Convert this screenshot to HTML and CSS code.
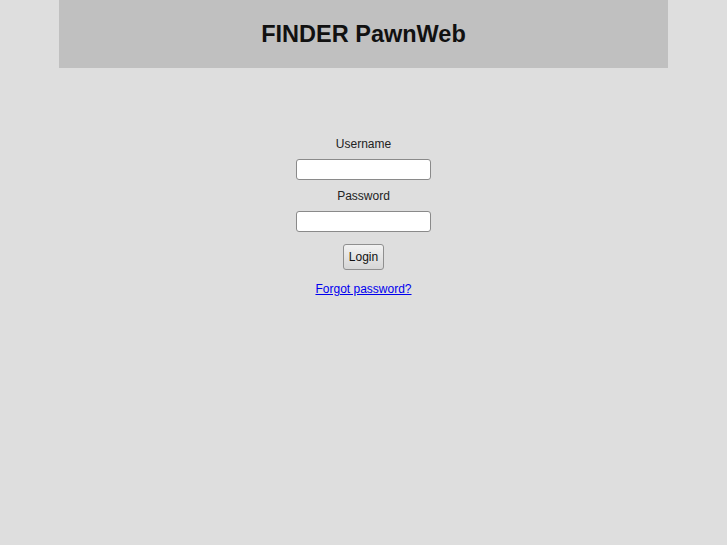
FILE: index.html
```html
<!DOCTYPE html>
<html>
<head>
<meta charset="utf-8">
<title>FINDER PawnWeb</title>
<link rel="stylesheet" href="styles.css">
</head>
<body>
<div class="header"><h1>FINDER PawnWeb</h1></div>
<form class="login">
  <label class="lbl" for="u">Username</label>
  <input class="field" id="u" type="text">
  <label class="lbl" for="p">Password</label>
  <input class="field" id="p" type="password">
  <button class="btn" type="button">Login</button>
  <a class="forgot" href="#">Forgot password?</a>
</form>
</body>
</html>
```
FILE: styles.css
```css
html, body { margin: 0; padding: 0; }
body {
  background: #dedede;
  font-family: "Liberation Sans", Arial, sans-serif;
  color: #000;
  height: 545px;
}
.header {
  width: 609px;
  height: 68px;
  margin: 0 auto;
  background: #c0c0c0;
  display: flex;
  align-items: center;
  justify-content: center;
}
.header h1 {
  margin: 0;
  font-size: 23.5px;
  font-weight: bold;
  color: #111;
}
.login {
  display: flex;
  flex-direction: column;
  align-items: center;
  padding-top: 69px;
}
.lbl {
  font-size: 12px;
  line-height: 14px;
  color: #222;
}
.field {
  box-sizing: border-box;
  width: 135px;
  height: 21px;
  margin: 8px 0 9px;
  border: 1px solid #8a8a8a;
  border-radius: 3px;
  background: #fff;
  padding: 0 3px;
}
.btn {
  box-sizing: border-box;
  margin-top: 3px;
  height: 26px;
  padding: 0 5px;
  font-family: "Liberation Sans", Arial, sans-serif;
  font-size: 12px;
  color: #111;
  border: 1px solid #8f8f8f;
  border-radius: 3px;
  background: linear-gradient(#f2f2f2, #d6d6d6);
}
.forgot {
  margin-top: 12px;
  font-size: 12px;
  color: #0000ee;
  text-decoration: underline;
}
```
